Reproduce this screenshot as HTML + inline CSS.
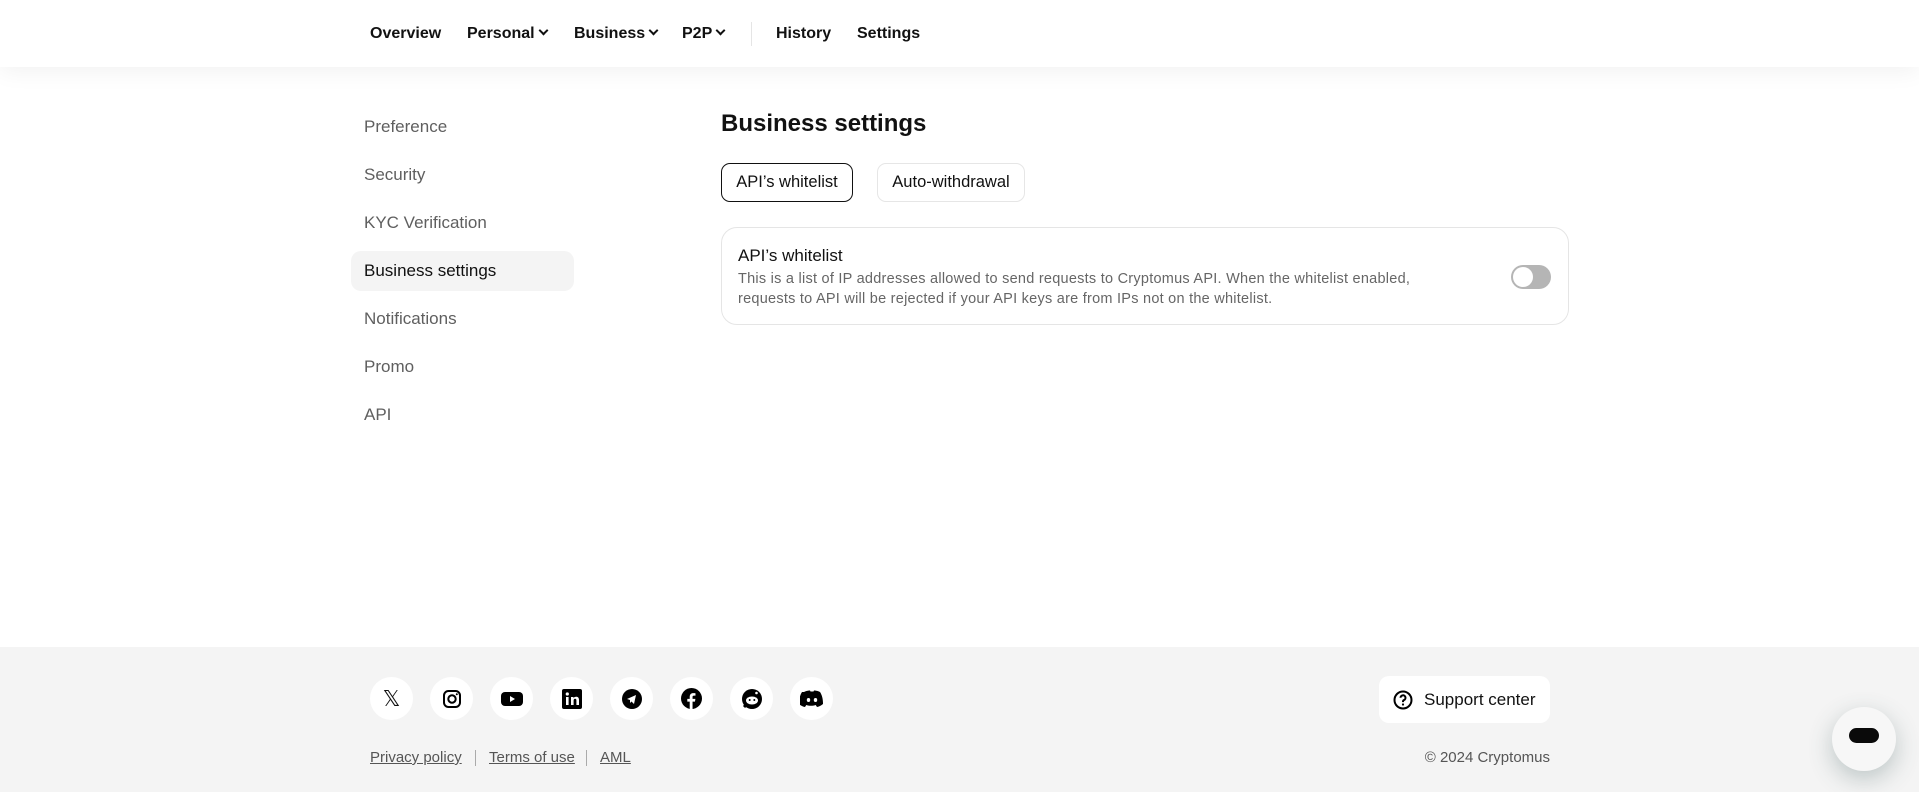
<!DOCTYPE html>
<html><head><meta charset="utf-8"><style>
*{box-sizing:border-box;margin:0;padding:0}
body{width:1919px;height:792px;position:relative;overflow:hidden;background:#fff;font-family:"Liberation Sans",sans-serif;color:#111}
.abs{position:absolute;white-space:nowrap}
header{position:absolute;left:0;top:0;width:1919px;height:67px;background:#fff;box-shadow:0 4px 24px rgba(0,0,0,.06);z-index:2}
.nav{font-size:16px;font-weight:bold;top:25px}
.chev{display:inline-block;width:7px;height:7px;border-right:2px solid #111;border-bottom:2px solid #111;transform:rotate(45deg);margin-left:5px;position:relative;top:-4px}
.side{font-size:17px;color:#5f5f5f;left:364px}
.tab{position:absolute;top:163px;height:39px;border:1px solid #e6e6e6;border-radius:9px;font-size:16.5px;line-height:37px;text-align:center}
footer{position:absolute;left:0;top:647px;width:1919px;height:145px;background:#f4f4f4}
.ic{position:absolute;top:677px;width:43px;height:43px;border-radius:50%;background:#fff;display:flex;align-items:center;justify-content:center}
.lnk{font-size:15px;color:#555;text-decoration:underline;top:749px}
</style></head><body>
<header>
<div class="abs nav" style="left:370px">Overview</div>
<div class="abs nav" style="left:467px">Personal<span class="chev"></span></div>
<div class="abs nav" style="left:574px">Business<span class="chev"></span></div>
<div class="abs nav" style="left:682px">P2P<span class="chev"></span></div>
<div class="abs" style="left:751px;top:22px;width:1px;height:24px;background:#e5e5e5"></div>
<div class="abs nav" style="left:776px">History</div>
<div class="abs nav" style="left:857px">Settings</div>
</header>
<div class="abs" style="left:351px;top:251px;width:223px;height:40px;background:#f4f4f4;border-radius:10px"></div>
<div class="abs side" style="top:117px">Preference</div>
<div class="abs side" style="top:165px">Security</div>
<div class="abs side" style="top:213px">KYC Verification</div>
<div class="abs side" style="top:261px;color:#111">Business settings</div>
<div class="abs side" style="top:309px">Notifications</div>
<div class="abs side" style="top:357px">Promo</div>
<div class="abs side" style="top:405px">API</div>
<div class="abs" style="left:721px;top:110px;font-size:24px;font-weight:bold">Business settings</div>
<div class="tab" style="left:721px;width:132px;border-color:#111">API’s whitelist</div>
<div class="tab" style="left:877px;width:148px">Auto-withdrawal</div>
<div class="abs" style="left:721px;top:227px;width:848px;height:98px;border:1px solid #e5e5e5;border-radius:16px"></div>
<div class="abs" style="left:738px;top:246px;font-size:17px">API’s whitelist</div>
<div class="abs" style="left:738px;top:269px;font-size:14.5px;letter-spacing:.25px;color:#666;line-height:20px">This is a list of IP addresses allowed to send requests to Cryptomus API. When the whitelist enabled,<br>requests to API will be rejected if your API keys are from IPs not on the whitelist.</div>
<div class="abs" style="left:1511px;top:265px;width:40px;height:24px;border-radius:12px;background:#b5b5b5"><div style="position:absolute;left:2px;top:2px;width:20px;height:20px;border-radius:50%;background:#fff"></div></div>
<footer></footer>
<div class="ic" style="left:370px"><span style="font-size:22px">𝕏</span></div>
<div class="ic" style="left:430px"><svg width="20" height="20" viewBox="0 0 20 20"><rect x="2" y="2" width="16" height="16" rx="4.5" fill="none" stroke="#000" stroke-width="2"/><circle cx="10" cy="10" r="3.7" fill="none" stroke="#000" stroke-width="2"/><circle cx="14.8" cy="5.2" r="1" fill="#000"/></svg></div>
<div class="ic" style="left:490px"><svg width="22" height="16" viewBox="0 0 22 16"><rect x="0" y="1" width="22" height="14" rx="4" fill="#000"/><path d="M9 5v6l5-3z" fill="#fff"/></svg></div>
<div class="ic" style="left:550px"><svg width="20" height="20" viewBox="0 0 20 20"><rect width="20" height="20" rx="2" fill="#000"/><rect x="4" y="8" width="2.6" height="8" fill="#fff"/><circle cx="5.3" cy="5" r="1.6" fill="#fff"/><path d="M9 8h2.5v1.2c.5-.9 1.5-1.4 2.7-1.4 2 0 2.8 1.3 2.8 3.4V16h-2.6v-4.4c0-1.1-.3-1.8-1.3-1.8s-1.5.7-1.5 1.8V16H9z" fill="#fff"/></svg></div>
<div class="ic" style="left:610px"><svg width="20" height="20" viewBox="0 0 20 20"><circle cx="10" cy="10" r="10" fill="#000"/><path d="M5 10l9-4-2 9-2.5-2.5L8 14v-3z" fill="#fff"/></svg></div>
<div class="ic" style="left:670px"><svg width="21" height="21" viewBox="0 0 20 20"><circle cx="10" cy="10" r="10" fill="#000"/><path d="M11 20v-7h2.3l.4-2.7H11V8.6c0-.8.3-1.3 1.4-1.3h1.4V5c-.3 0-1.1-.1-2.1-.1-2.1 0-3.4 1.2-3.4 3.5v1.9H6V13h2.3v7z" fill="#fff"/></svg></div>
<div class="ic" style="left:730px"><svg width="22" height="22" viewBox="0 0 22 22"><circle cx="11" cy="11" r="10" fill="#000"/><path d="M3 19l3-3" stroke="#000" stroke-width="3"/><ellipse cx="11" cy="12.5" rx="6" ry="4" fill="#fff"/><circle cx="8.7" cy="12" r="1" fill="#000"/><circle cx="13.3" cy="12" r="1" fill="#000"/><circle cx="15.5" cy="5" r="1.3" fill="#fff"/></svg></div>
<div class="ic" style="left:790px"><svg width="24" height="18" viewBox="0 0 24 18"><path d="M4 2c3-1.5 5-1.5 6-1.5l.5 1h3l.5-1c1 0 3 0 6 1.5 2 3 3 7 3 12-2 1.8-4 2.5-6 3l-1.3-2c-3 1-6.4 1-9.4 0L5 17c-2-.5-4-1.2-6-3 0-5 1-9 3-12z" fill="#000"/><ellipse cx="8.5" cy="10" rx="1.7" ry="2" fill="#fff"/><ellipse cx="15.5" cy="10" rx="1.7" ry="2" fill="#fff"/></svg></div>
<div class="abs lnk" style="left:370px">Privacy policy</div>
<div class="abs" style="left:475px;top:750px;width:1px;height:16px;background:#aaa"></div>
<div class="abs lnk" style="left:489px">Terms of use</div>
<div class="abs" style="left:586px;top:750px;width:1px;height:16px;background:#aaa"></div>
<div class="abs lnk" style="left:600px">AML</div>
<div class="abs" style="left:1379px;top:676px;width:171px;height:47px;background:#fff;border-radius:10px"></div>
<svg class="abs" style="left:1393px;top:690px" width="20" height="20" viewBox="0 0 20 20"><circle cx="10" cy="10" r="8.5" fill="none" stroke="#000" stroke-width="2"/><path d="M7.5 7.8a2.5 2.5 0 1 1 3.5 2.3c-.7.3-1 .8-1 1.5v.5" fill="none" stroke="#000" stroke-width="2"/><circle cx="10" cy="14.5" r="1.1" fill="#000"/></svg>
<div class="abs" style="left:1424px;top:690px;font-size:17px">Support center</div>
<div class="abs" style="right:369px;top:749px;font-size:15px;color:#555">© 2024 Cryptomus</div>
<div class="abs" style="left:1832px;top:707px;width:64px;height:64px;border-radius:50%;background:#f7f7f7;box-shadow:0 8px 24px rgba(60,90,90,.3)"><div style="position:absolute;left:17px;top:21px;width:30px;height:15px;border-radius:8px;background:#0a0a0a"></div></div>
</body></html>
